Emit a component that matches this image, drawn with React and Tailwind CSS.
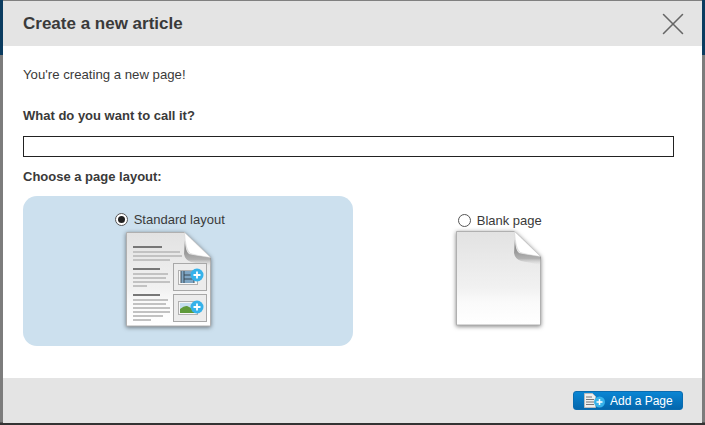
import { X } from "lucide-react";

function PageShape({ id }) {
  return (
    <>
      <defs>
        <linearGradient id={id} x1="0" y1="0" x2="0" y2="1">
          <stop offset="0" stopColor="#e2e2e2" />
          <stop offset="0.6" stopColor="#f1f1f1" />
          <stop offset="0.75" stopColor="#fafafa" />
          <stop offset="1" stopColor="#ffffff" />
        </linearGradient>
        <linearGradient id={id + "s"} x1="0" y1="0" x2="0" y2="1">
          <stop offset="0" stopColor="#666666" />
          <stop offset="0.75" stopColor="#999999" stopOpacity="0.7" />
          <stop offset="1" stopColor="#cccccc" stopOpacity="0" />
        </linearGradient>
      </defs>
      <path d="M0.500 0.500h58l26 25v68.500H0.500z" fill={`url(#${id})`} stroke="#b0b0b0" />
      <path d="M59 8q0 11 4 14q2 1 22 3v9q-14-3-20-4q-6-2-7-8z" fill={`url(#${id + "s"})`} />
      <path d="M58.500 0.500l26 25q-14-2-20-4q-5-3-6-21z" fill="#ffffff" stroke="#cfcfcf" strokeWidth="0.500" />
    </>
  );
}

function StandardDoc() {
  const lines = [
    [7, 14, 29, "#777"], [7, 19, 47, "#c2c2c2"], [7, 23, 49, "#c2c2c2"], [7, 27, 37, "#c2c2c2"],
    [7, 36, 27, "#777"], [7, 41, 35, "#c2c2c2"], [7, 45, 33, "#c2c2c2"], [7, 49, 37, "#c2c2c2"], [7, 53, 14, "#c2c2c2"],
    [7, 62, 27, "#777"], [7, 67, 35, "#c2c2c2"], [7, 71, 33, "#c2c2c2"], [7, 75, 37, "#c2c2c2"], [7, 79, 37, "#c2c2c2"], [7, 83, 30, "#c2c2c2"], [7, 87, 18, "#c2c2c2"],
  ];
  return (
    <svg width="87" height="97" viewBox="0 0 87 97" className="drop-shadow-[0_1px_2px_rgba(0,0,0,0.5)]">
      <PageShape id="stdpage" />
      {lines.map(([x, y, w, c], i) => (
        <rect key={i} x={x} y={y} width={w} height="2" fill={c} />
      ))}
      <rect x="47.500" y="31.500" width="33" height="27" fill="#ececec" stroke="#a8a8a8" />
      <rect x="47.500" y="62.500" width="33" height="27" fill="#ececec" stroke="#a8a8a8" />

      {/* film thumbnail */}
      <rect x="52.500" y="38.500" width="19" height="14" fill="#f7f7f7" stroke="#b0b0b0" />
      <rect x="55" y="39" width="13" height="12" fill="#7fa6c4" />
      <path d="M55 39v12M58 39v12M68 39v12M58 43h10M58 47h10" stroke="#33414d" strokeWidth="0.900" />

      {/* photo thumbnail */}
      <rect x="52.500" y="69.500" width="19" height="13" fill="#f7f7f7" stroke="#b0b0b0" />
      <rect x="54" y="71" width="16" height="10" fill="#c5dff0" />
      <path d="M54 81v-4q6-5 9-2l7 3v3z" fill="#5f9a3a" />

      <circle cx="71" cy="43" r="6.500" fill="#36b2ea" />
      <path d="M67.500 43h7M71 39.500v7" stroke="#fff" strokeWidth="1.800" />
      <circle cx="71" cy="75" r="6.500" fill="#36b2ea" />
      <path d="M67.500 75h7M71 71.500v7" stroke="#fff" strokeWidth="1.800" />
    </svg>
  );
}

function BlankDoc() {
  return (
    <svg width="87" height="97" viewBox="0 0 87 97" className="drop-shadow-[0_1px_2px_rgba(0,0,0,0.5)]">
      <PageShape id="blankpage" />
    </svg>
  );
}

function Radio({ checked }) {
  return (
    <span className="flex h-[13px] w-[13px] items-center justify-center rounded-full border border-[#555] bg-white">
      {checked && <span className="h-[7px] w-[7px] rounded-full bg-[#222]" />}
    </span>
  );
}

export default function App() {
  return (
    <div
      className="h-[425px] w-[705px] overflow-hidden bg-[linear-gradient(to_bottom,#0b3c60_55px,#7c7c7c_55px,#7c7c7c_422px,#333_423px)] px-[3px] text-[#3a3a3a]"
      style={{ fontFamily: '"Liberation Sans", Arial, sans-serif' }}
    >
      <div className="flex h-[423px] flex-col border-t border-[#808080] bg-white">
        {/* Header */}
        <div className="flex h-[45px] items-center justify-between bg-[#e4e4e4] pl-5 pr-[10px]">
          <span className="text-[17px] font-bold">Create a new article</span>
          <X className="h-[38px] w-[38px] text-[#666]" strokeWidth={1} absoluteStrokeWidth />
        </div>

        {/* Body */}
        <div className="flex-1 px-5">
          <p className="mt-[21px] text-[13.2px] leading-4">You're creating a new page!</p>
          <p className="mt-[25px] text-[13px] font-bold leading-4">What do you want to call it?</p>
          <input className="mt-[12px] block h-[21px] w-[651px] border border-[#222] bg-white" />
          <p className="mt-[12px] text-[13px] font-bold leading-4">Choose a page layout:</p>

          <div className="mt-[11px] flex">
            <div className="flex h-[150px] w-[330px] flex-col items-center rounded-[14px] bg-[#cce0ee] pr-[36px] pt-[15px]">
              <label className="flex items-center gap-[6px] text-[13px] leading-4">
                <Radio checked /> <span className="pt-px">Standard layout</span>
              </label>
              <div className="mt-[4px] pr-[1px]">
                <StandardDoc />
              </div>
            </div>
            <div className="flex h-[150px] w-[330px] flex-col items-center pr-[35px] pt-[16px]">
              <label className="flex items-center gap-[6px] text-[13px] leading-4">
                <Radio /> <span className="pt-px">Blank page</span>
              </label>
              <div className="mt-[2px] pr-[1px]">
                <BlankDoc />
              </div>
            </div>
          </div>
        </div>

        {/* Footer */}
        <div className="flex h-[45px] items-start justify-end bg-[#e4e4e4] pr-[19px] pt-[13px]">
          <button className="flex h-[19px] w-[110px] items-center gap-[3px] rounded-[3px] border border-[#0a6cb0] bg-gradient-to-b from-[#0a86d4] to-[#0467ad] pl-[10px] text-[12px] text-white">
            <svg width="23" height="15" viewBox="0 0 23 15">
              <path d="M0.500 0.500h8l3 3v11h-11z" fill="#eee" stroke="#bbb" />
              <path d="M2 4h6M2 6.500h8M2 9h8M2 11.500h8" stroke="#777" />
              <circle cx="15.500" cy="9" r="5.500" fill="#36b2ea" />
              <path d="M12.500 9h6M15.500 6v6" stroke="#fff" strokeWidth="1.500" />
            </svg>
            Add a Page
          </button>
        </div>
      </div>
    </div>
  );
}
